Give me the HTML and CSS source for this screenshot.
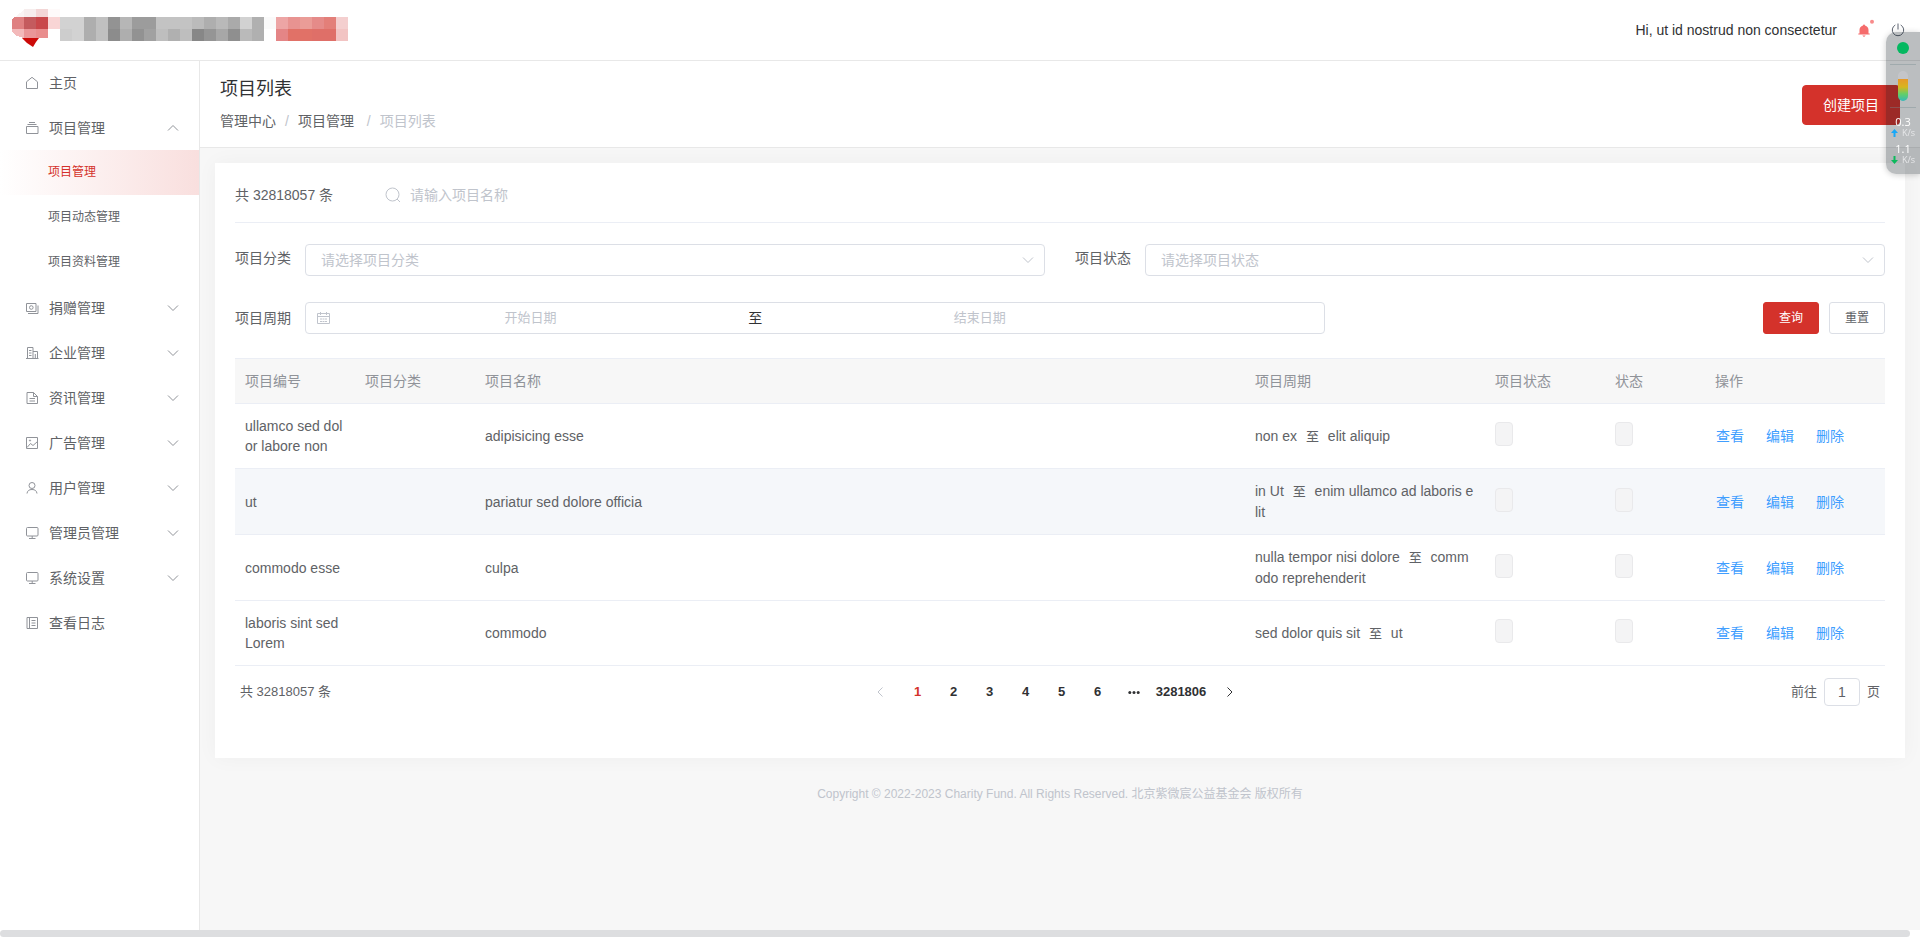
FILE: index.html
```html
<!DOCTYPE html>
<html lang="zh-CN">
<head>
<meta charset="utf-8">
<title>项目列表</title>
<link rel="stylesheet" href="styles.css">
</head>
<body>
<svg class="sprite" aria-hidden="true">
  <symbol id="i-home" viewBox="0 0 14 14"><path d="M1.500 12.500V5.800L7 1.300l5.500 4.500v6.700z"/></symbol>
  <symbol id="i-box" viewBox="0 0 14 14"><path d="M1.500 5.500h11.500v7H1.500zM2.500 3.500h9M4 1.500h6"/></symbol>
  <symbol id="i-money" viewBox="0 0 14 14"><path d="M1.500 2.500h9.500v8H1.500zM13 4.500v8H3"/><circle cx="6.300" cy="6.500" r="1.800"/></symbol>
  <symbol id="i-office" viewBox="0 0 14 14"><path d="M2.500 12.500v-11h5.500v11M8 5.500h4.500v7M1 12.500h12.500M4 4.500h2.500M4 7h2.500M4 9.500h2.500M10.300 8v4.500"/></symbol>
  <symbol id="i-doc" viewBox="0 0 14 14"><path d="M2 1.500h6.500l4 4v7H2zM8.500 1.500v4h4M4.500 7.500h5.500M4.500 10h5.500"/></symbol>
  <symbol id="i-pic" viewBox="0 0 14 14"><path d="M1.500 1.500h11v11h-11zM2 11.500l3.500-4 2.500 2 4.500-4"/><circle cx="5" cy="4.500" r=".6"/></symbol>
  <symbol id="i-user" viewBox="0 0 14 14"><circle cx="7" cy="4.500" r="3"/><path d="M2 12.500c.3-2.700 2-4 5-4s4.700 1.300 5 4"/></symbol>
  <symbol id="i-screen" viewBox="0 0 14 14"><rect x="1.500" y="1.500" width="11.500" height="8.500" rx="1"/><path d="M7.200 10v2.500M4 12.500h6.500"/></symbol>
  <symbol id="i-log" viewBox="0 0 14 14"><path d="M2 1.500h10.500v11H2zM4.500 1.500v11M6.500 4.500h4M6.500 7h4M6.500 9.500h4"/></symbol>
  <symbol id="i-down" viewBox="0 0 12 12"><path d="M1 3.500l5 5 5-5"/></symbol>
  <symbol id="i-up" viewBox="0 0 12 12"><path d="M1 8.500l5-5 5 5"/></symbol>
</svg>

<header class="topbar">
  <svg class="logo" width="348" height="50" viewBox="0 0 348 50" role="img" aria-label="Logo" shape-rendering="crispEdges">
    <path d="M15 17l9-7v7z" fill="#faf4f4"/>
    <path fill="#f6eded" d="M24 9h12v8H24z"/><path fill="#f3d6d6" d="M36 9h12v8H36z"/><path fill="#fefafa" d="M48 9h12v8H48z"/>
    <path fill="#df8081" d="M14 17h10v12H12v-9z"/><path fill="#c45b5e" d="M24 17h12v12H24z"/><path fill="#c9484b" d="M36 17h12v12H36z"/><path fill="#f9d5d5" d="M48 17h12v12H48z"/>
    <path fill="#f3b9ba" d="M12 29h12v9l-7-2-5-4z"/><path fill="#ea9698" d="M24 29h12v9H24z"/><path fill="#e98d8d" d="M36 29h12v9H36z"/>
    <path fill="#cc0a08" shape-rendering="auto" d="M22 38h17l-3 4-3 5-6-4z"/>
    <g fill="#d2d2d2"><path d="M60 17h24v12H60z"/><path d="M72 29h12v12H72z"/><path d="M240 17h12v12h-12z"/></g>
    <path fill="#cdcdcd" d="M60 29h12v12H60z"/><path fill="#aeaeae" d="M84 17h12v24H84z"/><path fill="#c0c0c0" d="M96 17h12v24H96z"/>
    <path fill="#939393" d="M108 17h12v12h-12z"/><path fill="#8c8c8c" d="M108 29h12v12h-12z"/>
    <path fill="#b6b6b6" d="M120 17h12v12h-12z"/><path fill="#aeaeae" d="M120 29h12v12h-12z"/>
    <path fill="#9c9c9c" d="M132 17h24v12h-24z"/><path fill="#929292" d="M132 29h12v12h-12z"/><path fill="#a1a1a1" d="M144 29h12v12h-12z"/>
    <path fill="#c3c3c3" d="M156 17h36v12h-36z"/><path fill="#bebebe" d="M156 29h36v12h-36z"/><path fill="#b0b0b0" d="M168 29h12v12h-12z"/>
    <path fill="#bbb" d="M192 17h12v12h-12z"/><path fill="#878787" d="M192 29h12v12h-12z"/>
    <path fill="#aeaeae" d="M204 17h12v12h-12z"/><path fill="#959595" d="M204 29h12v12h-12z"/>
    <path fill="#b9b9b9" d="M216 17h12v12h-12z"/><path fill="#a7a7a7" d="M216 29h12v12h-12z"/>
    <path fill="#aaa" d="M228 17h12v12h-12z"/><path fill="#8f8f8f" d="M228 29h12v12h-12z"/>
    <path fill="#bababa" d="M240 29h12v12h-12z"/><path fill="#b0b0b0" d="M252 17h12v24h-12z"/><path fill="#fafafa" d="M264 17h12v12h-12z"/>
    <path fill="#eda5a5" d="M276 17h12v12h-12z"/><path fill="#e89391" d="M288 17h12v12h-12z"/><path fill="#ea9c97" d="M300 17h12v12h-12z"/><path fill="#e58b89" d="M312 17h12v12h-12z"/><path fill="#e37f79" d="M324 17h12v12h-12z"/><path fill="#f4cfcf" d="M336 17h12v12h-12z"/>
    <path fill="#e48586" d="M276 29h12v12h-12z"/><path fill="#e17167" d="M288 29h24v12h-24z"/><path fill="#df6f68" d="M312 29h24v12h-24z"/><path fill="#f2c4c3" d="M336 29h12v12h-12z"/>
  </svg>
  <div class="top-actions">
    <span class="greeting">Hi, ut id nostrud non consectetur</span>
    <button class="icon-btn" aria-label="通知">
      <svg width="20" height="20" viewBox="0 0 20 20"><path d="M9 5.500a1 1 0 0 1 2 0c2.300.6 3.500 2.300 3.500 4.500v3.500h1.200v1H4.300v-1h1.200V10c0-2.200 1.200-3.900 3.500-4.500zM8.300 15.500h3.400L10 17z" fill="#f56c6c"/><circle cx="18" cy="1.800" r="2" fill="#f88b8b"/></svg>
    </button>
    <button class="icon-btn" aria-label="退出">
      <svg width="14" height="14" viewBox="0 0 14 14" fill="none" stroke="#5c6370"><path d="M4.300 2A5.700 5.700 0 1 0 9.700 2M7 .5v6"/></svg>
    </button>
  </div>
</header>

<div class="layout">
  <nav class="sidebar" aria-label="主菜单">
    <a class="item" href="#"><svg class="ico"><use href="#i-home"/></svg>主页</a>
    <a class="item" href="#"><svg class="ico"><use href="#i-box"/></svg>项目管理<svg class="arrow"><use href="#i-up"/></svg></a>
    <a class="item sub active" href="#">项目管理</a>
    <a class="item sub" href="#">项目动态管理</a>
    <a class="item sub" href="#">项目资料管理</a>
    <a class="item" href="#"><svg class="ico"><use href="#i-money"/></svg>捐赠管理<svg class="arrow"><use href="#i-down"/></svg></a>
    <a class="item" href="#"><svg class="ico"><use href="#i-office"/></svg>企业管理<svg class="arrow"><use href="#i-down"/></svg></a>
    <a class="item" href="#"><svg class="ico"><use href="#i-doc"/></svg>资讯管理<svg class="arrow"><use href="#i-down"/></svg></a>
    <a class="item" href="#"><svg class="ico"><use href="#i-pic"/></svg>广告管理<svg class="arrow"><use href="#i-down"/></svg></a>
    <a class="item" href="#"><svg class="ico"><use href="#i-user"/></svg>用户管理<svg class="arrow"><use href="#i-down"/></svg></a>
    <a class="item" href="#"><svg class="ico"><use href="#i-screen"/></svg>管理员管理<svg class="arrow"><use href="#i-down"/></svg></a>
    <a class="item" href="#"><svg class="ico"><use href="#i-screen"/></svg>系统设置<svg class="arrow"><use href="#i-down"/></svg></a>
    <a class="item" href="#"><svg class="ico"><use href="#i-log"/></svg>查看日志</a>
  </nav>

  <main class="content">
    <div class="page-head">
      <div>
        <h1 class="title">项目列表</h1>
        <nav class="crumbs" aria-label="面包屑"><a href="#">管理中心</a><span class="sep">/</span><a href="#">项目管理</a>&nbsp;<span class="sep">/</span><span class="here">项目列表</span></nav>
      </div>
      <button class="btn primary large">创建项目</button>
    </div>

    <section class="card">
      <div class="search-row">
        <span>共 32818057 条</span>
        <label class="search">
          <svg width="16" height="16" viewBox="0 0 16 16"><circle cx="7.500" cy="7.500" r="6.500"/><path d="M12 12l3 3"/></svg>
          <input type="text" placeholder="请输入项目名称" aria-label="项目名称">
        </label>
      </div>

      <div class="filters">
        <div class="field">
          <label for="category">项目分类</label>
          <div class="select"><select id="category"><option>请选择项目分类</option></select><svg class="arrow"><use href="#i-down"/></svg></div>
        </div>
        <div class="field">
          <label for="state">项目状态</label>
          <div class="select"><select id="state"><option>请选择项目状态</option></select><svg class="arrow"><use href="#i-down"/></svg></div>
        </div>
      </div>

      <div class="period-row">
        <div class="field period-field">
          <label for="start">项目周期</label>
          <div class="range">
            <svg width="14" height="14" viewBox="0 0 14 14"><path d="M1.500 2.500h12v10h-12zM1.500 5.500h12M4.500 1v3M10.500 1v3M4 8h2M6.500 8h2M9 8h2M4 10.500h2M6.500 10.500h2M9 10.500h2"/></svg>
            <input id="start" type="text" placeholder="开始日期">
            <span class="to">至</span>
            <input type="text" placeholder="结束日期" aria-label="结束日期">
          </div>
        </div>
        <div class="buttons">
          <button class="btn primary">查询</button>
          <button class="btn">重置</button>
        </div>
      </div>

      <table class="table">
        <colgroup><col class="w120"><col class="w120"><col><col class="w240"><col class="w120"><col class="w100"><col class="w180"></colgroup>
        <thead>
          <tr><th>项目编号</th><th>项目分类</th><th>项目名称</th><th>项目周期</th><th>项目状态</th><th>状态</th><th>操作</th></tr>
        </thead>
        <tbody>
          <tr>
            <td>ullamco sed dolor labore non</td><td></td><td>adipisicing esse</td>
            <td class="period">non ex <span class="mid">至</span> elit aliquip</td>
            <td><span class="tag"></span></td><td><span class="tag"></span></td>
            <td><div class="ops"><a href="#">查看</a><a href="#">编辑</a><a href="#">删除</a></div></td>
          </tr>
          <tr class="tall hover">
            <td>ut</td><td></td><td>pariatur sed dolore officia</td>
            <td class="period">in Ut <span class="mid">至</span> enim ullamco ad laboris elit</td>
            <td><span class="tag"></span></td><td><span class="tag"></span></td>
            <td><div class="ops"><a href="#">查看</a><a href="#">编辑</a><a href="#">删除</a></div></td>
          </tr>
          <tr class="tall">
            <td>commodo esse</td><td></td><td>culpa</td>
            <td class="period">nulla tempor nisi dolore <span class="mid">至</span> commodo reprehenderit</td>
            <td><span class="tag"></span></td><td><span class="tag"></span></td>
            <td><div class="ops"><a href="#">查看</a><a href="#">编辑</a><a href="#">删除</a></div></td>
          </tr>
          <tr>
            <td>laboris sint sed Lorem</td><td></td><td>commodo</td>
            <td class="period">sed dolor quis sit <span class="mid">至</span> ut</td>
            <td><span class="tag"></span></td><td><span class="tag"></span></td>
            <td><div class="ops"><a href="#">查看</a><a href="#">编辑</a><a href="#">删除</a></div></td>
          </tr>
        </tbody>
      </table>

      <div class="pagination">
        <span>共 32818057 条</span>
        <div class="pages">
          <button class="nav" aria-label="上一页" disabled><svg width="12" height="12" viewBox="0 0 12 12"><path d="M8.500 1.500L4 6l4.500 4.500"/></svg></button>
          <button class="num current">1</button><button class="num">2</button><button class="num">3</button><button class="num">4</button><button class="num">5</button><button class="num">6</button>
          <button class="more" aria-label="更多"><svg width="12" height="12" viewBox="0 0 12 12"><circle cx="1.800" cy="6.500" r="1.500"/><circle cx="6" cy="6.500" r="1.500"/><circle cx="10.200" cy="6.500" r="1.500"/></svg></button>
          <button class="num last">3281806</button>
          <button class="nav" aria-label="下一页"><svg width="12" height="12" viewBox="0 0 12 12"><path d="M3.500 1.500L8 6l-4.500 4.500"/></svg></button>
        </div>
        <label class="jump">前往<input type="text" value="1">页</label>
      </div>
    </section>

    <footer class="footer">Copyright © 2022-2023 Charity Fund. All Rights Reserved. 北京紫微宸公益基金会 版权所有</footer>
  </main>
</div>
<div class="scroll-track"><div class="scroll-thumb"></div></div>

<aside class="monitor">
  <span class="dot"></span>
  <div class="gauge-box"><div class="gauge"></div></div>
  <div class="speed"><b>0.3</b><span><svg width="7" height="8" viewBox="0 0 7 8"><path d="M3.500 0L7 4H4.500v4h-2V4H0z" fill="#18a8f8"/></svg>K/s</span></div>
  <div class="speed"><b>1.1</b><span><svg width="7" height="8" viewBox="0 0 7 8"><path d="M3.500 8L0 4h2.500V0h2v4H7z" fill="#0cb95c"/></svg>K/s</span></div>
</aside>
</body>
</html>
```
FILE: styles.css
```css
* { box-sizing: border-box; }
body {
  margin: 0;
  min-height: 100vh;
  display: flex;
  flex-direction: column;
  background: #fff;
  color: #606266;
  font: 14px/20px "Liberation Sans", "Noto Sans CJK SC", sans-serif;
}
a { color: inherit; text-decoration: none; }
button, input, select { font: inherit; color: inherit; margin: 0; }
input, select { min-width: 0; outline: none; }
input::placeholder { color: #c0c4cc; opacity: 1; }
svg { display: block; flex: none; }
.sprite { position: absolute; width: 0; height: 0; }

.topbar {
  height: 60px;
  display: flex;
  align-items: center;
  justify-content: space-between;
  padding-right: 15px;
  box-shadow: 0 1px 0 #e8e8e8;
  z-index: 1;
}
.logo { align-self: flex-start; }
.top-actions { display: flex; align-items: center; gap: 17px; color: #303133; }
.icon-btn { border: 0; padding: 0; background: none; }
.icon-btn svg { overflow: visible; }

.layout { flex: 1; display: flex; }
.sidebar { width: 200px; flex: none; border-right: 1px solid #e8e8e8; background: #fff; }
.item { display: flex; align-items: center; height: 45px; padding: 0 20px 0 25px; }
.ico { width: 14px; height: 14px; margin-right: 10px; fill: none; stroke: #909399; }
.arrow { width: 12px; height: 12px; margin-left: auto; fill: none; stroke: #909399; }
.sub { padding-left: 48px; padding-bottom: 2px; font-size: 12px; }
.active { color: #d4322b; background: linear-gradient(to right, #fff, #f9dfde); }

.content { flex: 1; min-width: 0; background: #f7f7f7; }
.page-head {
  display: flex;
  align-items: center;
  justify-content: space-between;
  padding: 17px 20px 14px;
  background: #fff;
  border-bottom: 1px solid #e8e8e8;
}
.title { margin: 0 0 8px; font-size: 18px; line-height: 24px; font-weight: 400; color: #303133; }
.crumbs { line-height: 24px; }
.sep { margin: 0 9px; color: #c0c4cc; }
.here { color: #c0c4cc; }

.btn {
  height: 32px;
  padding: 0 15px;
  border: 1px solid #dcdfe6;
  border-radius: 3px;
  background: #fff;
  font-size: 12px;
}
.primary { border-color: #d4322b; background: #d4322b; color: #fff; }
.large { height: 40px; padding: 0 20px; border-radius: 4px; font-size: 14px; }

.card {
  margin: 15px 15px 0;
  padding: 20px 20px 50px;
  background: #fff;
  box-shadow: 0 0 20px rgba(0, 0, 0, .04);
}
.search-row {
  display: flex;
  gap: 52px;
  padding-bottom: 15px;
  border-bottom: 1px solid #ebeef5;
  line-height: 24px;
}
.search { flex: 1; display: flex; align-items: center; gap: 9px; }
.search svg { fill: none; stroke: #c0c4cc; }
.search input { flex: 1; height: 24px; padding: 0; border: 0; }

.filters { display: grid; grid-template-columns: 1fr 1fr; gap: 30px; margin-top: 21px; }
.field { display: flex; }
.field label { width: 70px; flex: none; line-height: 28px; }
.field.period-field label { line-height: 32px; }
.select { flex: 1; display: grid; align-items: center; }
.select > * { grid-area: 1 / 1; }
.select select {
  appearance: none;
  width: 100%;
  height: 32px;
  padding: 0 30px 0 15px;
  border: 1px solid #dcdfe6;
  border-radius: 4px;
  background: #fff;
  color: #c0c4cc;
}
.select .arrow { justify-self: end; margin-right: 11px; stroke: #c0c4cc; pointer-events: none; }

.period-row { display: flex; justify-content: space-between; align-items: center; gap: 30px; margin: 26px 0 24px; }
.period-field { flex: 0 1 1090px; }
.range {
  flex: 1;
  display: flex;
  align-items: center;
  height: 32px;
  padding: 0 10px;
  border: 1px solid #dcdfe6;
  border-radius: 4px;
  font-size: 13px;
}
.range svg { fill: none; stroke: #c0c4cc; margin-right: 6px; }
.range input { width: 39%; padding: 0; border: 0; text-align: center; }
.to { width: 60px; text-align: center; font-size: 14px; color: #303133; }
.buttons { display: flex; gap: 10px; }

.table { width: 100%; table-layout: fixed; border-collapse: separate; border-spacing: 0; border-top: 1px solid #ebeef5; }
.w100 { width: 100px; }
.w120 { width: 120px; }
.w180 { width: 180px; }
.w240 { width: 240px; }
.table th {
  height: 45px;
  padding: 0 10px;
  border-bottom: 1px solid #ebeef5;
  background: #f7f7f7;
  color: #909399;
  font-weight: 400;
  text-align: left;
}
.table td { height: 65px; padding: 0 10px; border-bottom: 1px solid #ebeef5; word-break: break-all; }
.table .tall td { height: 66px; }
.hover td { background: #f5f7fa; }
.period { line-height: 21px; }
.mid { margin: 0 5px; font-size: 13px; }
.tag { display: block; width: 18px; height: 24px; margin-bottom: 4px; border: 1px solid #e9e9eb; border-radius: 4px; background: #f4f4f5; }
.ops { display: flex; gap: 22px; padding-left: 1px; color: #409eff; }

.pagination {
  display: flex;
  align-items: center;
  justify-content: space-between;
  height: 32px;
  margin-top: 10px;
  padding: 0 5px;
  font-size: 13px;
}
.pages { display: flex; padding-right: 12px; color: #303133; }
.pages button { height: 28px; border: 0; background: none; font-weight: 700; }
.pages svg { fill: none; stroke: #303133; }
.pages .nav { padding: 0 14px; }
.nav:disabled svg { stroke: #c0c4cc; }
.pages .num { min-width: 36px; padding: 0 4px; }
.pages .current { color: #d4322b; }
.pages .more { padding: 0 12px; }
.more svg { fill: #303133; stroke: none; }
.jump { display: flex; align-items: center; }
.jump input { width: 36px; height: 28px; margin: 0 7px; padding: 0; border: 1px solid #dcdfe6; border-radius: 4px; text-align: center; font-size: 14px; }

.footer { margin: 26px 0; text-align: center; font-size: 12px; color: #c0c4cc; }

.scroll-track { height: 7px; padding-right: 10px; }
.scroll-thumb { height: 7px; border-radius: 4px; background: #dddee0; }

.monitor {
  position: fixed;
  top: 32px;
  right: 0;
  z-index: 2;
  width: 34px;
  height: 142px;
  padding: 10px 4px 0;
  border-radius: 10px 0 0 10px;
  background: rgba(10, 20, 30, .28);
  box-shadow: 0 1px 6px rgba(0, 0, 0, .2);
  color: #fff;
  text-align: center;
}
.dot { display: block; width: 12px; height: 12px; margin: 0 auto 10px; border-radius: 50%; background: #04b860; }
.gauge-box { padding: 6px 0; margin-bottom: 8px; border: solid rgba(120, 140, 145, .4); border-width: 1px 0; }
.gauge { width: 10px; height: 30px; margin: 0 auto; border-radius: 5px; background: linear-gradient(#c4c5c9 8px, #e8982a 8px, #d8b51e 16px, #62cf68 23px, #35b9b8); }
.speed { height: 27px; font: 11px/11px "Open Sans", sans-serif; }
.speed b { display: block; font-weight: 400; }
.speed span { display: flex; align-items: center; justify-content: center; gap: 4px; font-size: 9px; color: #e6e7e9; }
```
